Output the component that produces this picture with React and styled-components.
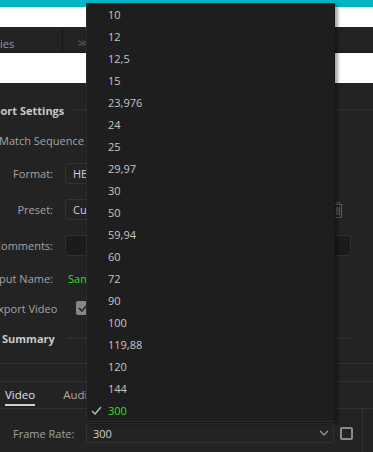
import React from "react";
import styled, { createGlobalStyle } from "styled-components";

const GlobalStyle = createGlobalStyle`
  html, body {
    margin: 0;
    padding: 0;
    background: #232323;
  }
  body {
    font-family: "Open Sans", "Liberation Sans", sans-serif;
    font-size: 11px;
    overflow: hidden;
  }
`;

const Page = styled.div`
  position: relative;
  width: 373px;
  height: 452px;
  overflow: hidden;
  background: #232323;
  display: flex;
  flex-direction: column;
`;

const TealBar = styled.div`
  height: 7px;
  background: #04b5c6;
  flex-shrink: 0;
`;

const WhiteStrip = styled.div`
  height: ${(p) => p.h}px;
  background: #ffffff;
  flex-shrink: 0;
`;

const TabBar = styled.div`
  height: 25px;
  display: flex;
  background: #232323;
  border-bottom: 1px solid #171717;
  flex-shrink: 0;
`;

const PanelTab = styled.div`
  width: 62px;
  display: flex;
  align-items: flex-end;
  padding-bottom: 1px;
  overflow: hidden;
  border-right: 1px solid #161616;
  color: #8e9aaa;
  white-space: nowrap;
  span {
    margin-left: -39px;
  }
`;

const MoreTabs = styled.div`
  display: flex;
  align-items: flex-end;
  padding: 0 0 2px 15px;
  color: #555;
  font-weight: bold;
  letter-spacing: -2px;
`;

const Panel = styled.div`
  flex: 1;
  display: flex;
  flex-direction: column;
  overflow: hidden;
`;

/* panel content is scrolled 20px to the left */
const Scrolled = styled.div`
  margin-left: -20px;
  display: flex;
  flex-direction: column;
`;

const Row = styled.div`
  display: flex;
  align-items: center;
  height: ${(p) => p.h || 20}px;
  margin-top: ${(p) => p.mt || 0}px;
  white-space: nowrap;
`;

const SectionTitle = styled.div`
  font-weight: bold;
  color: #c9c9c9;
  padding-left: ${(p) => p.pl || 0}px;
`;

const Rule = styled.div`
  flex: 1;
  height: 2px;
  background: #2c2c2c;
  margin-left: ${(p) => p.ml}px;
  margin-right: ${(p) => p.mr || 0}px;
`;

const SmallBox = styled.div`
  width: 13px;
  height: 13px;
  margin-right: 6px;
  box-sizing: border-box;
  border: 2px solid #777;
  border-radius: 2px;
`;

const Text = styled.div`
  color: #a4a4a4;
  padding-left: ${(p) => p.pl || 0}px;
`;

const Label = styled.div`
  width: 73px;
  flex-shrink: 0;
  display: flex;
  justify-content: flex-end;
  color: #a4a4a4;
`;

const Select = styled.div`
  margin-left: 12px;
  width: 260px;
  height: 21px;
  box-sizing: border-box;
  border: 1px solid #333;
  border-radius: 3px;
  color: #d2d2d2;
  padding-left: 7px;
  display: flex;
  align-items: center;
`;

const TextInput = styled.div`
  margin-left: 12px;
  width: 286px;
  height: 21px;
  box-sizing: border-box;
  border: 1px solid #303030;
  border-radius: 3px;
  background: #1b1b1b;
`;

const GreenValue = styled.div`
  margin-left: 15px;
  color: #33df2c;
`;

const IconSlot = styled.div`
  margin-left: 8px;
  display: flex;
  align-items: center;
`;

const FilledCheck = styled.div`
  margin-left: 19px;
  width: 14px;
  height: 14px;
  border-radius: 2px;
  background: #878787;
  display: flex;
  align-items: center;
  justify-content: center;
`;

const Line = styled.div`
  height: 1px;
  background: #323232;
  margin-top: ${(p) => p.mt || 0}px;
  flex-shrink: 0;
`;

const Tabs = styled.div`
  height: 26px;
  display: flex;
  gap: 28px;
  padding-left: 5px;
  flex-shrink: 0;
`;

const Tab = styled.div`
  display: flex;
  align-items: center;
  padding-top: 2px;
  color: ${(p) => (p.active ? "#e2e2e2" : "#a8a8a8")};
  border-bottom: 2px solid ${(p) => (p.active ? "#cfcfcf" : "transparent")};
  margin-bottom: 2px;
  font-size: 11.5px;
`;

const Bottom = styled.div`
  flex: 1;
  display: flex;
`;

const BottomMain = styled.div`
  width: 363px;
  border-right: 1px solid #323232;
  padding-top: 14px;
  box-sizing: border-box;
`;

const FrameRow = styled.div`
  display: flex;
  align-items: center;
  height: 20px;
`;

const FrameLabel = styled.div`
  width: 86px;
  flex-shrink: 0;
  padding-left: 13px;
  box-sizing: border-box;
  color: #a4a4a4;
  white-space: nowrap;
`;

const FrameSelect = styled.div`
  width: 248px;
  flex-shrink: 0;
  height: 20px;
  box-sizing: border-box;
  border: 1px solid #333;
  border-radius: 3px;
  display: flex;
  align-items: center;
  justify-content: space-between;
  padding: 0 4px 0 6px;
  color: #d2d2d2;
`;

const EmptyCheck = styled.div`
  margin-left: 6px;
  width: 13px;
  height: 13px;
  flex-shrink: 0;
  box-sizing: border-box;
  border: 2px solid #8a8a8a;
  border-radius: 2px;
`;

const Menu = styled.div`
  position: absolute;
  left: 86px;
  top: 3px;
  width: 249px;
  box-sizing: border-box;
  background: #1e1e1e;
  border-left: 1px solid #2c2c2c;
  border-bottom: 1px solid #2c2c2c;
  border-right: 1px solid #191919;
  box-shadow: 3px 2px 3px rgba(0, 0, 0, 0.35);
  display: flex;
  flex-direction: column;
`;

const MenuItem = styled.div`
  height: 22px;
  display: flex;
  align-items: center;
  padding-left: 4px;
  color: ${(p) => (p.selected ? "#33df2c" : "#c6c6c6")};
`;

const CheckSlot = styled.div`
  width: 17px;
  display: flex;
  align-items: center;
`;

const rates = [
  "10", "12", "12,5", "15", "23,976", "24", "25", "29,97", "30", "50",
  "59,94", "60", "72", "90", "100", "119,88", "120", "144", "300",
];

const TrashIcon = () => (
  <svg width="10" height="17" viewBox="0 0 10 17" fill="none" stroke="#5a5a5a" strokeWidth="1">
    <path d="M0.5 3.5 H9.5" />
    <path d="M3.5 3.5 V1.5 H6.5 V3.5" />
    <path d="M1.5 3.5 V16.5 H8.5 V3.5" />
    <path d="M3.5 6 V14 M5 6 V14 M6.5 6 V14" />
  </svg>
);

export default function App() {
  return (
    <>
      <GlobalStyle />
      <Page>
        <TealBar />
        <WhiteStrip h={20} />
        <TabBar>
          <PanelTab>
            <span>Properties</span>
          </PanelTab>
          <MoreTabs>&gt;&gt;</MoreTabs>
        </TabBar>
        <WhiteStrip h={30} />
        <Panel>
          <Scrolled>
            <Row mt={17}>
              <SectionTitle pl={1}>Export Settings</SectionTitle>
              <Rule ml={8} />
            </Row>
            <Row mt={10}>
              <SmallBox />
              <Text>Match Sequence Settings</Text>
            </Row>
            <Row h={21} mt={13}>
              <Label>Format:</Label>
              <Select>HEVC (H.265)</Select>
            </Row>
            <Row h={21} mt={15}>
              <Label>Preset:</Label>
              <Select>Custom</Select>
              <IconSlot>
                <TrashIcon />
              </IconSlot>
            </Row>
            <Row h={21} mt={15}>
              <Label>Comments:</Label>
              <TextInput />
            </Row>
            <Row mt={12}>
              <Label>Output Name:</Label>
              <GreenValue>Sample.mp4</GreenValue>
            </Row>
            <Row mt={10}>
              <Text pl={12}>Export Video</Text>
              <FilledCheck>
                <svg width="10" height="8" viewBox="0 0 10 8">
                  <polyline points="1,4 4,7 9,1" fill="none" stroke="#2e2e2e" strokeWidth="1.8" />
                </svg>
              </FilledCheck>
            </Row>
            <Row mt={10}>
              <SectionTitle pl={22}>Summary</SectionTitle>
              <Rule ml={12} mr={22} />
            </Row>
          </Scrolled>
          <Line mt={15} />
          <Line mt={17} />
          <Tabs>
            <Tab active>Video</Tab>
            <Tab>Audio</Tab>
          </Tabs>
          <Line />
          <Bottom>
            <BottomMain>
              <FrameRow>
                <FrameLabel>Frame Rate:</FrameLabel>
                <FrameSelect>
                  300
                  <svg width="10" height="6" viewBox="0 0 10 6">
                    <polyline points="1,1 5,5 9,1" fill="none" stroke="#a0a0a0" strokeWidth="1.2" />
                  </svg>
                </FrameSelect>
                <EmptyCheck />
              </FrameRow>
            </BottomMain>
          </Bottom>
        </Panel>

        <Menu>
          {rates.map((r) => (
            <MenuItem key={r} selected={r === "300"}>
              <CheckSlot>
                {r === "300" && (
                  <svg width="11" height="9" viewBox="0 0 11 9">
                    <polyline points="1,5 4,8 10,1" fill="none" stroke="#bdbdbd" strokeWidth="1.4" />
                  </svg>
                )}
              </CheckSlot>
              {r}
            </MenuItem>
          ))}
        </Menu>
      </Page>
    </>
  );
}
